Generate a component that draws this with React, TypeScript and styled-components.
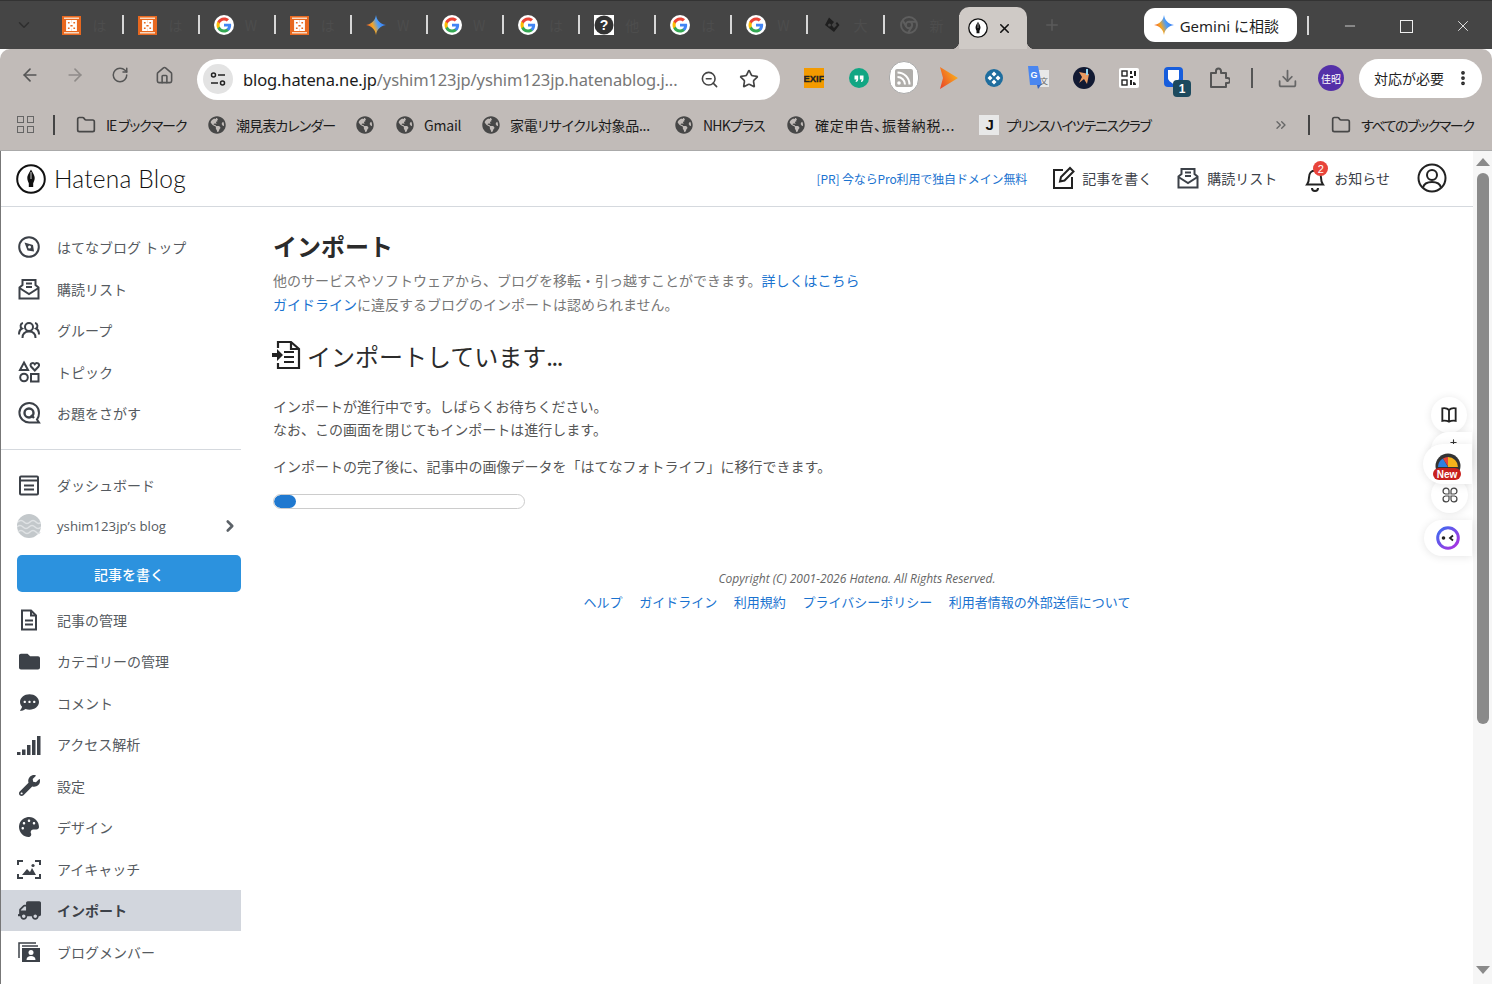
import React from 'react'
import styled, { createGlobalStyle } from 'styled-components'
import { FaGlobeAmericas, FaCommentDots, FaWrench, FaPalette, FaTruck, FaFolder } from 'react-icons/fa'
import { ArrowLeft, ArrowRight, RotateCw, Home, ZoomOut, Star, Download, ChevronDown, Plus, X, Minus, EllipsisVertical, ChevronsRight, Folder, ChevronRight } from 'lucide-react'

const JP = `"Noto Sans CJK JP", "Noto Sans", sans-serif`
const UI = `"Noto Sans", "Noto Sans CJK JP", sans-serif`

const Global = createGlobalStyle`
  html, body { margin: 0; padding: 0; background: #fff; overflow: hidden; }
  * { box-sizing: border-box; }
  a { text-decoration: none; color: inherit; }
`

/* ---------- drawn icons ---------- */
const GoogleG = ({ size = 20 }: { size?: number }) => (
  <svg width={size} height={size} viewBox="0 0 24 24">
    <circle cx="12" cy="12" r="12" fill="#fff" />
    <path fill="#4285F4" d="M20.6 12.2c0-.6-.1-1.2-.2-1.8H12v3.5h4.8c-.2 1.1-.8 2-1.8 2.7v2.2h2.9c1.7-1.6 2.7-3.9 2.7-6.6z" />
    <path fill="#34A853" d="M12 21c2.4 0 4.5-.8 5.9-2.2L15 16.6c-.8.5-1.8.9-3 .9-2.3 0-4.3-1.6-5-3.7H4v2.3C5.5 19 8.5 21 12 21z" />
    <path fill="#FBBC05" d="M7 13.8c-.4-1.1-.4-2.4 0-3.6V7.9H4c-1.3 2.5-1.3 5.6 0 8.2l3-2.3z" />
    <path fill="#EA4335" d="M12 6.5c1.3 0 2.5.5 3.4 1.3l2.6-2.6C16.5 3.8 14.4 3 12 3 8.5 3 5.5 5 4 7.9l3 2.3c.7-2.1 2.7-3.7 5-3.7z" />
  </svg>
)

const GeminiStar = ({ size = 20, id }: { size?: number; id: string }) => (
  <svg width={size} height={size} viewBox="0 0 24 24">
    <defs>
      <linearGradient id={id} x1="0" y1="0.700" x2="1" y2="0.300">
        <stop offset="0" stopColor="#ea4a35" />
        <stop offset="0.350" stopColor="#f5a623" />
        <stop offset="0.600" stopColor="#4f9df5" />
        <stop offset="1" stopColor="#2b6ff2" />
      </linearGradient>
    </defs>
    <path fill={`url(#${id})`} d="M12 0c1 6.500 4.800 10.500 12 12-7.200 1.500-11 5.500-12 12-1-6.500-4.800-10.500-12-12 7.200-1.500 11-5.500 12-12z" />
  </svg>
)

const XamppIcon = () => (
  <svg width="19" height="19" viewBox="0 0 19 19">
    <rect width="19" height="19" fill="#e8681f" />
    <rect x="2" y="1.500" width="15" height="1.500" fill="#f8d8c0" />
    <rect x="2" y="16" width="15" height="1.500" fill="#f8d8c0" />
    <path fill="none" stroke="#fff" strokeWidth="1.800" d="M5 5h3.500v3h2V5H14v3.500h-2.500v2H14V14h-3.500v-2.500h-2V14H5v-3.500h2.500v-2H5z" />
  </svg>
)

const HelpIcon = () => (
  <svg width="20" height="20" viewBox="0 0 20 20">
    <rect width="20" height="20" fill="#fff" />
    <circle cx="10" cy="10" r="9.500" fill="#333" />
    <text x="10" y="15" textAnchor="middle" fontSize="14" fontWeight="700" fontFamily="Liberation Sans" fill="#fff">?</text>
  </svg>
)

const DiamondIcon = () => (
  <svg width="16" height="16" viewBox="0 0 16 16" fill="#1f1f1f">
    <path d="M5 .5 10 5 7.500 8 10 11l3-3-1.500-1.500L13 5l2.500 3L10 15 1 8z" />
    <circle cx="5.500" cy="8" r="1.500" fill="#454545" />
  </svg>
)

const ChromeMuted = () => (
  <svg width="18" height="18" viewBox="0 0 18 18" fill="none" stroke="#5e5e5e" strokeWidth="2">
    <circle cx="9" cy="9" r="8" />
    <circle cx="9" cy="9" r="3.200" />
    <path d="M9 5.800h7M6.200 10.600 2.800 4.500M11.800 10.600 8.200 16.800" />
  </svg>
)

const PenLogo = ({ size }: { size: number }) => (
  <svg width={size} height={size} viewBox="0 0 30 30">
    <circle cx="15" cy="15" r="13.800" fill="#fff" stroke="#111" strokeWidth="2" />
    <path fill="#111" d="M15 5.500c1 2 3.700 5.500 3.700 8.500 0 2-.8 3.800-1.500 5.300v3.700h-4.400v-3.700c-.7-1.500-1.500-3.300-1.500-5.300 0-3 2.700-6.500 3.700-8.500z" />
    <path stroke="#fff" strokeWidth="0.800" d="M15 8v7" />
  </svg>
)

const SiteTune = () => (
  <svg width="18" height="18" viewBox="0 0 18 18" fill="none" stroke="#222" strokeWidth="1.500">
    <circle cx="4.500" cy="5" r="2" />
    <path d="M9 5h7M2 13h7" />
    <circle cx="13.500" cy="13" r="2" />
  </svg>
)

const ExifIcon = () => (
  <svg width="20" height="20" viewBox="0 0 20 20">
    <rect width="20" height="20" fill="#f39a00" />
    <text x="10" y="14" textAnchor="middle" fontSize="9.500" fontWeight="700" fontFamily="Liberation Sans" stroke="#222" strokeWidth="0.300" fill="#222">EXIF</text>
  </svg>
)

const QuoteIcon = () => (
  <svg width="20" height="20" viewBox="0 0 20 20">
    <circle cx="10" cy="10" r="10" fill="#11a683" />
    <path fill="#fff" d="M5.500 7.500h3.700v3.700c0 1.600-1 2.600-2.500 2.900v-1.400c.6-.2.900-.6.900-1.300H5.500zM10.800 7.500h3.700v3.700c0 1.600-1 2.600-2.500 2.900v-1.400c.6-.2.900-.6.900-1.300h-2.100z" />
  </svg>
)

const RssIcon = () => (
  <svg width="30" height="34" viewBox="0 0 30 34">
    <rect x="0.500" y="0.500" width="29" height="32" rx="14.500" fill="#fff" stroke="#aaa" />
    <rect x="6" y="8" width="18" height="18" rx="2" fill="#b0aeab" />
    <circle cx="10" cy="22" r="1.800" fill="#fff" />
    <path fill="none" stroke="#fff" strokeWidth="2" d="M8.500 16a7.500 7.500 0 0 1 7.500 7.500M8.500 11.500a12 12 0 0 1 12 12" />
  </svg>
)

const PlayIcon = () => (
  <svg width="18" height="22" viewBox="0 0 18 22">
    <defs>
      <linearGradient id="pl" x1="0" y1="1" x2="1" y2="0.300">
        <stop offset="0" stopColor="#e8402b" />
        <stop offset="1" stopColor="#fbb41a" />
      </linearGradient>
    </defs>
    <path fill="url(#pl)" d="M0 0 18 11 0 22l3-11z" />
  </svg>
)

const BlueDial = () => (
  <svg width="18" height="18" viewBox="0 0 18 18">
    <circle cx="9" cy="9" r="9" fill="#1e6d9e" />
    <path fill="#fff" d="M9 2.500 11.500 5 9 7.500 6.500 5zM9 10.500 11.500 13 9 15.500 6.500 13zM5 6.500 7.500 9 5 11.500 2.500 9zM13 6.500 15.500 9 13 11.500 10.500 9z" />
  </svg>
)

const TranslateIcon = () => (
  <svg width="22" height="24" viewBox="0 0 22 24">
    <path fill="#e8e8e8" d="M8 4h13v17H11z" />
    <path fill="#4a86f0" d="M0 0h10l4 19H4L2 19z" />
    <path fill="#2f62c4" d="M9 19h4l-3 4z" />
    <text x="6" y="12" textAnchor="middle" fontSize="9" fontWeight="700" fontFamily="Liberation Sans" fill="#fff">G</text>
    <text x="16" y="18" textAnchor="middle" fontSize="8" fontFamily={JP} fill="#666">文</text>
  </svg>
)

const SparkIcon = () => (
  <svg width="22" height="22" viewBox="0 0 22 22">
    <circle cx="11" cy="11" r="11" fill="#121a33" />
    <path fill="#e79a62" d="M6 5 16 7l-2 10-3-5-5 4 3-6z" />
    <path fill="#8fd6f2" d="M13 2h2v6h-2z" />
  </svg>
)

const QrIcon = () => (
  <svg width="20" height="20" viewBox="0 0 20 20">
    <rect width="20" height="20" rx="2" fill="#fff" />
    <g fill="none" stroke="#222" strokeWidth="1.400">
      <rect x="3" y="3" width="5" height="5" />
      <rect x="3" y="12" width="5" height="5" />
    </g>
    <path fill="#222" d="M11 3h2v3h-2zM15 3h2v5h-2zM11 8h3v2h-3zM11 12h2v5h-2zM14 14a3 3 0 0 1 3 3h-3z" />
  </svg>
)

const VaultIcon = () => (
  <svg width="22" height="24" viewBox="0 0 22 24">
    <rect x="1" y="1" width="19" height="20" rx="4" fill="#175ddc" />
    <path fill="#fff" d="M5 4h11v8c0 2.500-3 4.500-5.500 6C8 16.500 5 14.500 5 12z" />
  </svg>
)

const PuzzleIcon = () => (
  <svg width="22" height="22" viewBox="0 0 22 22" fill="none" stroke="#555" strokeWidth="2" strokeLinejoin="round">
    <path d="M3 6h5V4a2.500 2.500 0 0 1 5 0v2h5v5h1.500a2.500 2.500 0 0 1 0 5H18v4H3z" />
  </svg>
)

const FlagFold = () => (
  <svg width="20" height="20" viewBox="0 0 24 24" fill="none" stroke="#222" strokeWidth="2.200">
    <path d="M12 6v15M12 6C10 4 7 3.500 4 4v15c3-.5 6 0 8 1 2-1 5-1.500 8-1V4c-3-.5-6 0-8 2z" />
  </svg>
)

const Compass = () => (
  <svg width="24" height="24" viewBox="0 0 24 24">
    <circle cx="12" cy="12" r="9.800" fill="none" stroke="#3c4148" strokeWidth="2" />
    <path fill="#3c4148" d="M7.500 7.500 16 10l1 6.500-6.500-1z" />
    <circle cx="12.500" cy="12" r="1.500" fill="#fff" />
  </svg>
)

const Mail = ({ size = 24 }: { size?: number }) => (
  <svg width={size} height={size} viewBox="0 0 24 24" fill="none" stroke="#3c4148" strokeWidth="2">
    <path d="M2.500 10.500v11h19v-11l-3-2.500V3h-13v5z" />
    <path d="M2.500 11 12 17l9.500-6" />
    <path d="M9 6.500h6M9 10h6" />
  </svg>
)

const People = () => (
  <svg width="24" height="24" viewBox="0 0 24 24" fill="none" stroke="#3c4148" strokeWidth="2">
    <circle cx="12" cy="9" r="4" />
    <path d="M5.500 20c0-4.500 3-6.500 6.500-6.500s6.500 2 6.500 6.500" />
    <path d="M6 5a3 3 0 0 0-1 5.500C3 11.500 2 13.500 2 16.500M18 5a3 3 0 0 1 1 5.500c2 1 3 3 3 6" />
  </svg>
)

const Shapes = () => (
  <svg width="24" height="24" viewBox="0 0 24 24" fill="none" stroke="#3c4148" strokeWidth="2">
    <path d="M7 2.500 11 10H3z" />
    <circle cx="7" cy="17.500" r="3.800" />
    <rect x="14" y="14" width="7.500" height="7.500" />
    <path d="M17.800 10.500 14 6.500c-1.800-2.500 2-5 3.800-2.300 1.800-2.700 5.600-.2 3.800 2.300z" />
  </svg>
)

const OdaiQ = () => (
  <svg width="24" height="24" viewBox="0 0 24 24" fill="none" stroke="#3c4148" strokeWidth="2">
    <path d="M22 21.500h-9.500A9.800 9.800 0 1 1 22 12c0 3-.6 5-2 6.500z" />
    <circle cx="12" cy="12" r="4.500" strokeWidth="2.400" />
    <path d="M14 14l3 3" strokeWidth="2.400" />
  </svg>
)

const Dashboard = () => (
  <svg width="24" height="24" viewBox="0 0 24 24" fill="none" stroke="#3c4148" strokeWidth="2">
    <rect x="3" y="3.500" width="18" height="18" rx="1" />
    <path d="M3 7.500h18M7 12.500h10M7 16.500h10" />
  </svg>
)

const DocIcon = () => (
  <svg width="24" height="24" viewBox="0 0 24 24" fill="none" stroke="#3c4148" strokeWidth="2">
    <path d="M5 2.500h9l5 5v14H5z" />
    <path d="M14 2.500v5h5M8 12.500h8M8 16.500h8" />
  </svg>
)

const Bars = () => (
  <svg width="24" height="24" viewBox="0 0 24 24" fill="#3c4148">
    <rect x="0" y="20" width="3.500" height="3" />
    <rect x="5" y="17.500" width="3.500" height="5.500" />
    <rect x="10" y="13" width="3.500" height="10" />
    <rect x="15" y="8" width="3.500" height="15" />
    <rect x="20" y="4" width="3.500" height="19" />
  </svg>
)

const Eyecatch = () => (
  <svg width="24" height="24" viewBox="0 0 24 24" fill="none" stroke="#3c4148" strokeWidth="2">
    <path d="M1 8V4h5M18 4h5v4M23 17v4h-5M6 21H1v-4" />
    <path fill="#3c4148" stroke="none" d="M5 18l5-6 3 3 2-4 4 7z" />
    <circle cx="16" cy="8.500" r="1.600" fill="#3c4148" stroke="none" />
  </svg>
)

const Members = () => (
  <svg width="24" height="24" viewBox="0 0 24 24">
    <path fill="none" stroke="#3c4148" strokeWidth="1.500" d="M2 18V3h17" />
    <path fill="none" stroke="#3c4148" strokeWidth="1.500" d="M5 6h16" />
    <rect x="5" y="8" width="18" height="14" fill="#3c4148" />
    <circle cx="14" cy="12.500" r="2.500" fill="#fff" />
    <path fill="#fff" d="M9.500 20c0-3 2-4 4.500-4s4.500 1 4.500 4z" />
  </svg>
)

const WriteIcon = () => (
  <svg width="24" height="24" viewBox="0 0 24 24" fill="none" stroke="#222" strokeWidth="2">
    <path d="M12 4H3v18h18V11" />
    <path d="M9 15.500 10 11 19 2l3.500 3.500-9 9z" />
  </svg>
)

const Bell = () => (
  <svg width="24" height="28" viewBox="0 0 24 28" fill="none" stroke="#222" strokeWidth="2">
    <path d="M4 20.500c1.500-2 2-3.500 2-7 0-4 2.500-7 6-7s6 3 6 7c0 3.500.5 5 2 7z" />
    <path d="M9 24a3 3 0 0 0 6 0" />
  </svg>
)

const UserRound = () => (
  <svg width="30" height="30" viewBox="0 0 30 30" fill="none" stroke="#222" strokeWidth="2">
    <circle cx="15" cy="15" r="13.500" />
    <circle cx="15" cy="12" r="5" />
    <path d="M6 24.500c1-4 4-5.500 9-5.500s8 1.500 9 5.500" />
  </svg>
)

const ImportDoc = () => (
  <svg width="30" height="30" viewBox="0 0 30 30" fill="none" stroke="#222" strokeWidth="2.200">
    <path d="M6 8V2h13l8 7v19H6v-5" />
    <path d="M19 2v7h8M12 12h10M12 17h10M12 22h10" />
    <path fill="#222" stroke="none" d="M0 13h5V9l6 6-6 6v-4H0z" />
  </svg>
)

const BlogAvatar = () => (
  <svg width="24" height="24" viewBox="0 0 24 24">
    <circle cx="12" cy="12" r="12" fill="#c3c8cb" />
    <path fill="none" stroke="#dfe2e4" strokeWidth="1.500" d="M1 8q3-3 6 0t6 0 6 0 5 0M0 13q3-3 6 0t6 0 6 0 6 0M1 18q3-3 6 0t6 0 6 0 4 0" />
  </svg>
)

const Gauge = () => (
  <svg width="26" height="22" viewBox="0 0 26 22">
    <circle cx="13" cy="13" r="12.500" fill="#333" />
    <path fill="#2f7fe0" d="M3 14a10 10 0 0 1 5-8.500l5 8.500z" />
    <path fill="#e8443a" d="M8 5.500a10 10 0 0 1 5-1.500v9.500z" />
    <path fill="#f5b21b" d="M13 4a10 10 0 0 1 10 10H13z" />
  </svg>
)

const Ring = () => (
  <svg width="24" height="24" viewBox="0 0 24 24">
    <defs>
      <linearGradient id="rg" x1="0" y1="0" x2="1" y2="1">
        <stop offset="0" stopColor="#3a6df0" />
        <stop offset="1" stopColor="#b12de0" />
      </linearGradient>
    </defs>
    <circle cx="12" cy="12" r="10.300" fill="#fff" stroke="url(#rg)" strokeWidth="3" />
    <circle cx="7.500" cy="12" r="1.800" fill="#222" />
    <path fill="none" stroke="#222" strokeWidth="1.800" d="M17 9.500 14 12l3 2.500" />
  </svg>
)

const Petals = () => (
  <svg width="16" height="16" viewBox="0 0 16 16" fill="none" stroke="#444" strokeWidth="1.200">
    <path d="M7 7H3.500a3 3 0 1 1 3.500-3.500zM9 7V3.500A3 3 0 1 1 12.500 7zM7 9v3.500A3 3 0 1 1 3.500 9zM9 9h3.500A3 3 0 1 1 9 12.500z" />
  </svg>
)

/* ---------- browser chrome ---------- */
const Shell = styled.div`
  width: 1492px;
  height: 984px;
  display: flex;
  flex-direction: column;
  overflow: hidden;
  position: relative;
  font-family: ${JP};
`

const TabStrip = styled.div`
  height: 49px;
  flex: none;
  display: flex;
  align-items: flex-start;
  background: #454545;
  border-top: 1px solid #333;
`

const TabChevron = styled.div`
  width: 47.5px;
  height: 48px;
  display: flex;
  align-items: center;
  justify-content: center;
  color: #2e2e2e;
`

const Tab = styled.div`
  width: 76.1px;
  height: 20px;
  margin-top: 14px;
  padding-left: 14px;
  display: flex;
  align-items: center;
  gap: 11px;
  flex: none;
  position: relative;
  font-size: 14px;
  color: #4d4d4d;
  overflow: hidden;
  &::after {
    content: '';
    position: absolute;
    right: 0;
    top: 0;
    width: 2px;
    height: 19px;
    background: #d6d6d6;
  }
`

const TabIcon = styled.span`
  width: 20px;
  height: 20px;
  display: flex;
  align-items: center;
  justify-content: center;
  flex: none;
`

const ActiveTab = styled.div`
  width: 68px;
  height: 42px;
  margin-top: 6px;
  margin-left: -2px;
  background: #cfcac6;
  border-radius: 10px 10px 0 0;
  display: flex;
  align-items: center;
  padding-left: 9px;
  gap: 9px;
  flex: none;
  color: #111;
  position: relative;
  &::before,
  &::after {
    content: '';
    position: absolute;
    bottom: 0;
    width: 8px;
    height: 8px;
  }
  &::before {
    left: -8px;
    background: radial-gradient(circle at 0 0, transparent 8px, #c1bbb8 8.5px);
  }
  &::after {
    right: -8px;
    background: radial-gradient(circle at 100% 0, transparent 8px, #c1bbb8 8.5px);
  }
`

const NewTab = styled.div`
  width: 48px;
  height: 48px;
  margin-left: 1px;
  display: flex;
  align-items: center;
  justify-content: center;
  color: #5b5b5b;
`

const GeminiButton = styled.div`
  margin: 7px 0 0 68px;
  width: 153px;
  height: 34px;
  background: #fff;
  border-radius: 11px;
  display: flex;
  align-items: center;
  padding-left: 10px;
  gap: 6px;
  font-family: ${UI};
  font-size: 15px;
  color: #1f1f1f;
  flex: none;
`

const StripDivider = styled.div`
  width: 2px;
  height: 19px;
  background: #d6d6d6;
  margin: 15px 13px 0 10px;
  flex: none;
`

const WindowButton = styled.div`
  width: 56.5px;
  height: 34px;
  margin-top: 8px;
  display: flex;
  align-items: center;
  justify-content: center;
  color: #eee;
  flex: none;
`

const MaxBox = styled.span`
  width: 13px;
  height: 13px;
  border: 1.5px solid #eee;
`

const Toolbar = styled.div`
  height: 52px;
  flex: none;
  display: flex;
  align-items: center;
  padding-left: 7px;
  background: #c1bbb8;
  border-radius: 10px 10px 0 0;
`

const NavButton = styled.div<{ $dim?: boolean }>`
  width: 45px;
  height: 40px;
  display: flex;
  align-items: center;
  justify-content: center;
  color: ${p => (p.$dim ? '#8f8b89' : '#555')};
  flex: none;
`

const Omnibox = styled.div`
  width: 583px;
  height: 41px;
  margin: 8px 0 0 10px;
  border-radius: 21px;
  background: #fff;
  display: flex;
  align-items: center;
  padding-left: 6px;
  flex: none;
`

const SiteButton = styled.div`
  width: 30px;
  height: 30px;
  border-radius: 50%;
  background: #e3e3e3;
  display: flex;
  align-items: center;
  justify-content: center;
  flex: none;
`

const Url = styled.div`
  margin-left: 10px;
  width: 446px;
  font-family: ${UI};
  font-size: 16.5px;
  letter-spacing: -0.12px;
  color: #777;
  white-space: nowrap;
  flex: none;
  b {
    font-weight: 400;
    color: #1b1b1b;
  }
`

const OmniIcon = styled.div`
  width: 40px;
  display: flex;
  justify-content: center;
  color: #444;
  flex: none;
`

const ExtSlot = styled.div<{ $w?: number; $ml?: number }>`
  width: ${p => p.$w ?? 45}px;
  height: 40px;
  margin: 6px 0 0 ${p => p.$ml ?? 0}px;
  display: flex;
  align-items: center;
  justify-content: center;
  position: relative;
  flex: none;
  color: #666;
`

const ExtBadge = styled.span`
  position: absolute;
  left: 22px;
  top: 22px;
  width: 18px;
  height: 17px;
  border-radius: 4px;
  background: #1d4a5e;
  color: #fff;
  font: 700 12px 'Liberation Sans', sans-serif;
  display: flex;
  align-items: center;
  justify-content: center;
`

const ToolDivider = styled.div`
  width: 2px;
  height: 20px;
  background: #555;
  margin: 6px 12px 0 10px;
  flex: none;
`

const Profile = styled.div`
  width: 26px;
  height: 26px;
  margin: 6px 0 0 9px;
  border-radius: 50%;
  background: #5430a8;
  color: #fff;
  font-size: 10px;
  display: flex;
  align-items: center;
  justify-content: center;
  flex: none;
`

const ActionPill = styled.div`
  width: 123px;
  height: 39px;
  margin: 6px 0 0 15px;
  border-radius: 20px;
  background: #fff;
  display: flex;
  align-items: center;
  justify-content: space-between;
  padding: 0 10px 0 15px;
  font-size: 14px;
  color: #222;
  flex: none;
`

const BookmarkBar = styled.div`
  height: 50px;
  flex: none;
  display: flex;
  align-items: center;
  background: #c1bbb8;
  border-bottom: 1px solid #aaa;
  padding: 0 0 2px 17px;
  font-size: 14px;
  color: #1c1c1c;
  white-space: nowrap;
`

const Apps = styled.div`
  width: 17px;
  height: 17px;
  display: grid;
  grid-template-columns: 1fr 1fr;
  gap: 3px;
  flex: none;
  span {
    border: 1.5px solid #666;
  }
`

const BarDivider = styled.div<{ $gap: string }>`
  width: 2px;
  height: 20px;
  background: #444;
  margin: ${p => p.$gap};
  flex: none;
`

const Bookmark = styled.div<{ $w: number; $ls?: number }>`
  width: ${p => p.$w}px;
  display: flex;
  align-items: center;
  gap: 10px;
  flex: none;
  font-feature-settings: 'palt';
  letter-spacing: ${p => p.$ls ?? 0}px;
  color: #1c1c1c;
  svg {
    flex: none;
    color: #474747;
  }
`

const JIcon = styled.span`
  width: 20px;
  height: 20px;
  margin-right: -3px;
  background: #e8e8e8;
  color: #111;
  font: 700 15px 'Liberation Sans', sans-serif;
  display: flex;
  align-items: center;
  justify-content: center;
  flex: none;
`

const More = styled.div`
  margin-left: 14px;
  width: 35px;
  color: #666;
  display: flex;
  flex: none;
`

/* ---------- page ---------- */
const Viewport = styled.div`
  flex: 1;
  min-height: 0;
  display: flex;
  background: #fff;
  border-left: 1px solid #777;
`

const Page = styled.div`
  flex: 1;
  min-width: 0;
  display: flex;
  flex-direction: column;
`

const Header = styled.header`
  height: 56px;
  flex: none;
  display: flex;
  align-items: center;
  padding: 0 26px 0 15px;
  border-bottom: 1px solid #d5d9de;
`

const Logo = styled.div`
  display: flex;
  align-items: center;
  gap: 8px;
  font-family: Lato, sans-serif;
  font-weight: 300;
  font-size: 24.5px;
  letter-spacing: 0.2px;
  color: #111;
  flex: none;
`

const HeaderNav = styled.nav`
  margin-left: auto;
  padding-bottom: 1px;
  display: flex;
  align-items: center;
  font-size: 14px;
  color: #3c4148;
`

const Promo = styled.a`
  font-size: 12px;
  letter-spacing: -0.12px;
  color: #1a73d0;
  margin-right: 24px;
`

const HeaderLink = styled.a<{ $mr: number }>`
  display: flex;
  align-items: center;
  gap: 7px;
  margin-right: ${p => p.$mr}px;
  position: relative;
`

const Badge = styled.span`
  position: absolute;
  left: 10px;
  top: -3px;
  width: 15px;
  height: 15px;
  border-radius: 50%;
  background: #e8443a;
  color: #fff;
  font: 400 11px 'Liberation Sans', sans-serif;
  display: flex;
  align-items: center;
  justify-content: center;
`

const Body = styled.div`
  flex: 1;
  min-height: 0;
  display: flex;
`

const Sidebar = styled.aside`
  width: 240px;
  flex: none;
  padding-top: 19.5px;
`

const NavRow = styled.a<{ $active?: boolean }>`
  height: 41.5px;
  display: flex;
  align-items: center;
  gap: 16px;
  padding-left: 16px;
  font-size: 14px;
  color: ${p => (p.$active ? '#3c4148' : '#555a60')};
  font-weight: ${p => (p.$active ? 700 : 400)};
  background: ${p => (p.$active ? '#d2d6dd' : 'transparent')};
`

const NavIcon = styled.span`
  width: 24px;
  height: 24px;
  display: flex;
  align-items: center;
  justify-content: center;
  color: #3c4148;
  flex: none;
`

const SideDivider = styled.hr`
  height: 1px;
  border: 0;
  background: #d5d9de;
  margin: 15px 0 14px;
`

const BlogName = styled.span`
  flex: 1;
  font-family: "Open Sans", ${JP};
  font-size: 13.2px;
`

const ChevronBox = styled.span`
  width: 24px;
  padding-left: 4px;
  color: #5c6268;
  display: flex;
`

const WriteButton = styled.a`
  margin: 8px 0 7px 16px;
  height: 37px;
  display: flex;
  align-items: center;
  justify-content: center;
  background: #2c92de;
  border-radius: 5px;
  color: #fff;
  font-size: 14px;
  font-weight: 500;
`

const Main = styled.main`
  flex: 1;
  min-width: 0;
  display: flex;
  flex-direction: column;
`

const Content = styled.div`
  padding: 23px 0 0 32px;
  color: #333;
`

const Title = styled.h1`
  margin: 0 0 6px;
  font-size: 24px;
  line-height: 32px;
  font-weight: 700;
  color: #2b2b2b;
`

const Lead = styled.p`
  margin: 0;
  font-size: 14px;
  line-height: 24px;
  color: #777;
  a {
    color: #1a73d0;
  }
`

const SubTitle = styled.h2`
  margin: 23px 0 0 -1px;
  height: 32px;
  display: flex;
  align-items: center;
  gap: 5px;
  font-size: 24px;
  font-weight: 400;
  color: #2b2b2b;
`

const Dots = styled.span`
  letter-spacing: -1.5px;
`

const Para = styled.p<{ $top: number }>`
  margin: ${p => p.$top}px 0 0;
  font-size: 14px;
  line-height: 23px;
  color: #555;
`

const Progress = styled.div`
  margin-top: 16px;
  width: 252px;
  height: 15px;
  border: 1px solid #ccc;
  border-radius: 8px;
  overflow: hidden;
  background: #fff;
`

const ProgressFill = styled.div`
  height: 100%;
  background: #2079d0;
  border-radius: 7px;
`

const Footer = styled.footer`
  margin-top: 60px;
  text-align: center;
`

const Copyright = styled.p`
  margin: 0;
  font-family: "Open Sans", sans-serif;
  font-style: italic;
  font-size: 12px;
  line-height: 20px;
  color: #666;
`

const FooterLinks = styled.div`
  margin-top: 4px;
  display: flex;
  justify-content: center;
  gap: 16.6px;
  font-size: 13px;
  line-height: 18px;
  color: #1a73d0;
`

const Scrollbar = styled.div`
  width: 19px;
  flex: none;
  background: #f6f6f6;
  display: flex;
  flex-direction: column;
  align-items: center;
  padding-left: 1px;
`

const ScrollArrow = styled.div<{ $down?: boolean }>`
  margin-top: ${p => (p.$down ? '242px' : '7px')};
  width: 0;
  height: 0;
  border-left: 7px solid transparent;
  border-right: 7px solid transparent;
  ${p => (p.$down ? 'border-top: 8px solid #8a8a8a;' : 'border-bottom: 8px solid #8a8a8a;')}
`

const ScrollThumb = styled.div`
  margin-top: 7px;
  width: 12px;
  height: 551px;
  background: #8a8a8a;
  border-radius: 6px;
`

const Floating = styled.div<{ $top: number; $left: number; $w: number; $h: number; $pill?: boolean; $z?: number }>`
  position: absolute;
  top: ${p => p.$top}px;
  left: ${p => p.$left}px;
  width: ${p => p.$w}px;
  height: ${p => p.$h}px;
  background: #fff;
  border-radius: ${p => (p.$pill ? `${p.$h / 2}px 0 0 ${p.$h / 2}px` : '50%')};
  box-shadow: 0 1px 8px rgba(0, 0, 0, 0.1);
  display: flex;
  align-items: center;
  justify-content: center;
  z-index: ${p => p.$z ?? 1};
`

const PeekIcon = styled.span`
  position: absolute;
  top: 6px;
  left: 18px;
  color: #333;
  display: flex;
`

const NewBadge = styled.span`
  position: absolute;
  left: 10px;
  top: 24px;
  width: 28px;
  height: 12px;
  border-radius: 6px;
  background: #c8201e;
  color: #fff;
  font: 700 10px 'Liberation Sans', sans-serif;
  display: flex;
  align-items: center;
  justify-content: center;
`

const topNav = [
  { icon: <Compass />, label: 'はてなブログ トップ' },
  { icon: <Mail />, label: '購読リスト' },
  { icon: <People />, label: 'グループ' },
  { icon: <Shapes />, label: 'トピック' },
  { icon: <OdaiQ />, label: 'お題をさがす' },
]

const manageNav = [
  { icon: <DocIcon />, label: '記事の管理' },
  { icon: <FaFolder size={21} />, label: 'カテゴリーの管理' },
  { icon: <FaCommentDots size={19} />, label: 'コメント' },
  { icon: <Bars />, label: 'アクセス解析' },
  { icon: <FaWrench size={21} />, label: '設定' },
  { icon: <FaPalette size={20} />, label: 'デザイン' },
  { icon: <Eyecatch />, label: 'アイキャッチ' },
  { icon: <FaTruck size={23} style={{ transform: 'scaleX(-1)' }} />, label: 'インポート', active: true },
  { icon: <Members />, label: 'ブログメンバー' },
]

const tabs = [
  { icon: <XamppIcon />, text: 'は' },
  { icon: <XamppIcon />, text: 'は' },
  { icon: <GoogleG />, text: 'W' },
  { icon: <XamppIcon />, text: 'は' },
  { icon: <GeminiStar size={20} id="g1" />, text: 'W' },
  { icon: <GoogleG />, text: 'W' },
  { icon: <GoogleG />, text: 'は' },
  { icon: <HelpIcon />, text: '他' },
  { icon: <GoogleG />, text: 'は' },
  { icon: <GoogleG />, text: 'W' },
  { icon: <DiamondIcon />, text: '大' },
  { icon: <ChromeMuted />, text: '新' },
]

const bookmarks = [
  { w: 132, ls: -1.1, icon: <Folder size={20} />, label: 'IE ブックマーク' },
  { w: 148, ls: -0.9, icon: <FaGlobeAmericas size={18} />, label: '潮見表カレンダー' },
  { w: 40, ls: 0, icon: <FaGlobeAmericas size={18} />, label: '' },
  { w: 86, ls: -0.2, icon: <FaGlobeAmericas size={18} />, label: 'Gmail' },
  { w: 193, ls: -0.3, icon: <FaGlobeAmericas size={18} />, label: '家電リサイクル対象品...' },
  { w: 112, ls: -0.8, icon: <FaGlobeAmericas size={18} />, label: 'NHKプラス' },
  { w: 192, ls: 0.8, icon: <FaGlobeAmericas size={18} />, label: '確定申告、振替納税...' },
]

export default function App() {
  return (
    <Shell>
      <Global />
      <TabStrip>
        <TabChevron><ChevronDown size={18} /></TabChevron>
        {tabs.map((t, i) => (
          <Tab key={i}>
            <TabIcon>{t.icon}</TabIcon>
            {t.text}
          </Tab>
        ))}
        <ActiveTab>
          <TabIcon><PenLogo size={20} /></TabIcon>
          <X size={15} strokeWidth={2.500} />
        </ActiveTab>
        <NewTab><Plus size={18} /></NewTab>
        <GeminiButton>
          <GeminiStar size={20} id="g2" />
          Gemini に相談
        </GeminiButton>
        <StripDivider />
        <WindowButton><Minus size={16} strokeWidth={1.200} /></WindowButton>
        <WindowButton><MaxBox /></WindowButton>
        <WindowButton><X size={18} strokeWidth={1.200} /></WindowButton>
      </TabStrip>

      <Toolbar>
        <NavButton><ArrowLeft size={20} /></NavButton>
        <NavButton $dim><ArrowRight size={20} /></NavButton>
        <NavButton><RotateCw size={18} /></NavButton>
        <NavButton><Home size={19} /></NavButton>
        <Omnibox>
          <SiteButton><SiteTune /></SiteButton>
          <Url><b>blog.hatena.ne.jp</b>/yshim123jp/yshim123jp.hatenablog.j...</Url>
          <OmniIcon><ZoomOut size={19} strokeWidth={2} /></OmniIcon>
          <OmniIcon><Star size={20} strokeWidth={2} /></OmniIcon>
        </Omnibox>
        <ExtSlot $ml={11}><ExifIcon /></ExtSlot>
        <ExtSlot><QuoteIcon /></ExtSlot>
        <ExtSlot><RssIcon /></ExtSlot>
        <ExtSlot><PlayIcon /></ExtSlot>
        <ExtSlot><BlueDial /></ExtSlot>
        <ExtSlot><TranslateIcon /></ExtSlot>
        <ExtSlot><SparkIcon /></ExtSlot>
        <ExtSlot><QrIcon /></ExtSlot>
        <ExtSlot><VaultIcon /><ExtBadge>1</ExtBadge></ExtSlot>
        <ExtSlot><PuzzleIcon /></ExtSlot>
        <ToolDivider />
        <ExtSlot $w={44}><Download size={21} /></ExtSlot>
        <Profile>佳昭</Profile>
        <ActionPill>
          対応が必要
          <EllipsisVertical size={18} color="#222" strokeWidth={3} />
        </ActionPill>
      </Toolbar>

      <BookmarkBar>
        <Apps><span /><span /><span /><span /></Apps>
        <BarDivider $gap="0 21px 0 19px" />
        {bookmarks.map((b, i) => (
          <Bookmark key={i} $w={b.w} $ls={b.ls}>
            {b.icon}
            {b.label && <span>{b.label}</span>}
          </Bookmark>
        ))}
        <Bookmark $w={280} $ls={-1.4}>
          <JIcon>J</JIcon>
          <span>プリンスハイツテニスクラブ</span>
        </Bookmark>
        <More><ChevronsRight size={16} /></More>
        <BarDivider $gap="0 21px 0 0" />
        <Bookmark $w={143} $ls={-1.4}>
          <Folder size={20} />
          <span>すべてのブックマーク</span>
        </Bookmark>
      </BookmarkBar>

      <Viewport>
        <Page>
          <Header>
            <Logo><PenLogo size={30} />Hatena Blog</Logo>
            <HeaderNav>
              <Promo>[PR] 今ならPro利用で独自ドメイン無料</Promo>
              <HeaderLink $mr={24}><WriteIcon />記事を書く</HeaderLink>
              <HeaderLink $mr={26}><Mail size={24} />購読リスト</HeaderLink>
              <HeaderLink $mr={27}><Bell /><Badge>2</Badge>お知らせ</HeaderLink>
              <UserRound />
            </HeaderNav>
          </Header>
          <Body>
            <Sidebar>
              {topNav.map(n => (
                <NavRow key={n.label}><NavIcon>{n.icon}</NavIcon>{n.label}</NavRow>
              ))}
              <SideDivider />
              <NavRow><NavIcon><Dashboard /></NavIcon>ダッシュボード</NavRow>
              <NavRow>
                <NavIcon><BlogAvatar /></NavIcon>
                <BlogName>yshim123jp’s blog</BlogName>
                <ChevronBox><ChevronRight size={18} strokeWidth={3.500} /></ChevronBox>
              </NavRow>
              <WriteButton>記事を書く</WriteButton>
              {manageNav.map(n => (
                <NavRow key={n.label} $active={n.active}><NavIcon>{n.icon}</NavIcon>{n.label}</NavRow>
              ))}
            </Sidebar>
            <Main>
              <Content>
                <Title>インポート</Title>
                <Lead>
                  他のサービスやソフトウェアから、ブログを移転・引っ越すことができます。<a>詳しくはこちら</a>
                  <br />
                  <a>ガイドライン</a>に違反するブログのインポートは認められません。
                </Lead>
                <SubTitle><ImportDoc /><span>インポートしています<Dots>...</Dots></span></SubTitle>
                <Para $top={24}>
                  インポートが進行中です。しばらくお待ちください。
                  <br />
                  なお、この画面を閉じてもインポートは進行します。
                </Para>
                <Para $top={14}>インポートの完了後に、記事中の画像データを「はてなフォトライフ」に移行できます。</Para>
                <Progress><ProgressFill style={{ width: `${(22 / 250) * 100}%` }} /></Progress>
              </Content>
              <Footer>
                <Copyright>Copyright (C) 2001-2026 Hatena. All Rights Reserved.</Copyright>
                <FooterLinks>
                  <a>ヘルプ</a>
                  <a>ガイドライン</a>
                  <a>利用規約</a>
                  <a>プライバシーポリシー</a>
                  <a>利用者情報の外部送信について</a>
                </FooterLinks>
              </Footer>
            </Main>
          </Body>
        </Page>
        <Scrollbar>
          <ScrollArrow />
          <ScrollThumb />
          <ScrollArrow $down />
        </Scrollbar>
      </Viewport>

      <Floating $top={397} $left={1431} $w={36} $h={36}><FlagFold /></Floating>
      <Floating $top={432} $left={1431} $w={41} $h={36} $pill><PeekIcon><Plus size={9} strokeWidth={3} /></PeekIcon></Floating>
      <Floating $top={477} $left={1431} $w={37} $h={36}><Petals /></Floating>
      <Floating $top={444} $left={1423} $w={49} $h={40} $pill $z={2}>
        <Gauge />
        <NewBadge>New</NewBadge>
      </Floating>
      <Floating $top={520} $left={1424} $w={48} $h={36} $pill><Ring /></Floating>
    </Shell>
  )
}
